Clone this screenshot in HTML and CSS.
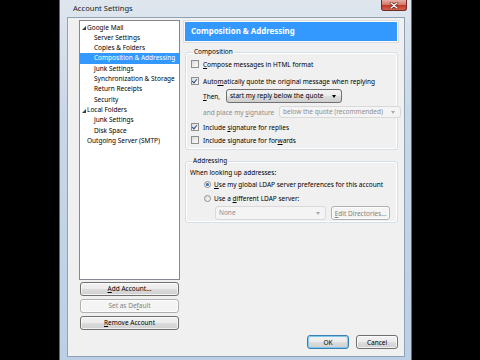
FILE: index.html
```html
<!DOCTYPE html>
<html lang="en">
<head>
  <meta charset="UTF-8">
  <title>Account Settings</title>
  <link rel="stylesheet" href="styles.css">
</head>
<body>
  <div class="window">
    <!-- Title bar -->
    <div class="titlebar">
      <span class="title">Account Settings</span>
      <span class="close-btn">
        <svg width="10" height="7" viewBox="0 0 10 7">
          <path d="M2 1 L8 6 M8 1 L2 6" stroke="#5a1a14" stroke-width="2.6" stroke-linecap="round"/>
          <path d="M2 1 L8 6 M8 1 L2 6" stroke="#fff" stroke-width="1.4" stroke-linecap="round"/>
        </svg>
      </span>
    </div>

    <div class="client">
      <div class="main">
        <!-- Account tree -->
        <div class="left-col">
          <div class="tree">
            <div class="tree-row top"><span class="twisty"></span>Google Mail</div>
            <div class="tree-row child">Server Settings</div>
            <div class="tree-row child">Copies &amp; Folders</div>
            <div class="tree-row child selected">Composition &amp; Addressing</div>
            <div class="tree-row child">Junk Settings</div>
            <div class="tree-row child">Synchronization &amp; Storage</div>
            <div class="tree-row child">Return Receipts</div>
            <div class="tree-row child">Security</div>
            <div class="tree-row top"><span class="twisty"></span>Local Folders</div>
            <div class="tree-row child">Junk Settings</div>
            <div class="tree-row child">Disk Space</div>
            <div class="tree-row top plain">Outgoing Server (SMTP)</div>
          </div>
          <div class="account-buttons">
            <button class="btn"><u>A</u>dd Account...</button>
            <button class="btn" disabled>Set as De<u>f</u>ault</button>
            <button class="btn"><u>R</u>emove Account</button>
          </div>
        </div>

        <!-- Settings pane -->
        <div class="right-col">
          <div class="pane-header">
            <div class="pane-title">Composition &amp; Addressing</div>
          </div>

          <fieldset class="group composition">
            <legend>Composition</legend>
            <div class="row r1">
              <span class="checkbox"></span>
              <span><u>C</u>ompose messages in HTML format</span>
            </div>
            <div class="row r2">
              <span class="checkbox checked"></span>
              <span>Auto<u>m</u>atically quote the original message when replying</span>
            </div>
            <div class="row r3 indent">
              <span class="then-label"><u>T</u>hen,</span>
              <span class="dropdown reply-select">start my reply below the quote<span class="arrow"></span></span>
            </div>
            <div class="row r4 indent">
              <span class="muted sig-label">and place my <u>s</u>ignature</span>
              <span class="dropdown disabled sig-select">below the quote (recommended)<span class="arrow"></span></span>
            </div>
            <div class="row r5">
              <span class="checkbox checked"></span>
              <span>Include <u>s</u>ignature for replies</span>
            </div>
            <div class="row r6">
              <span class="checkbox"></span>
              <span>Include signature for for<u>w</u>ards</span>
            </div>
          </fieldset>

          <fieldset class="group addressing">
            <legend>Addressing</legend>
            <div class="row a1">When looking up addresses:</div>
            <div class="row a2 radio-row">
              <span class="radio selected"></span>
              <span><u>U</u>se my global LDAP server preferences for this account</span>
            </div>
            <div class="row a3 radio-row">
              <span class="radio"></span>
              <span>Use a <u>d</u>ifferent LDAP server:</span>
            </div>
            <div class="row a4">
              <span class="dropdown disabled ldap-select">None<span class="arrow"></span></span>
              <button class="btn dir-btn" disabled><u>E</u>dit Directories...</button>
            </div>
          </fieldset>
        </div>
      </div>

      <div class="footer">
        <button class="btn default">OK</button>
        <button class="btn">Cancel</button>
      </div>
    </div>
  </div>
</body>
</html>
```

FILE: styles.css
```css
body {
  margin: 0;
  height: 360px;
  overflow: hidden;
  background: #000;
  font-family: 'Noto Sans', 'Open Sans', sans-serif;
  font-size: 6.5px;
  color: #000;
}

u {
  text-decoration: underline;
  text-underline-offset: 1px;
}

.window {
  margin-left: 59px;
  width: 351px;
  height: 362px;
  background: linear-gradient(#dfe6ee, #c9d8e8 30%, #bccfe4);
  border-left: 1px solid #5d6b7a;
  border-right: 1px solid #5d6b7a;
  display: flex;
  flex-direction: column;
}

/* Title bar */
.titlebar {
  height: 17px;
  display: flex;
  align-items: flex-start;
}

.title {
  margin: 3px 0 0 13px;
  font-size: 7.6px;
  color: #1b1b1b;
}

.close-btn {
  margin-left: auto;
  margin-right: 4px;
  width: 24px;
  height: 10px;
  border: 1px solid #6e2c26;
  border-top: none;
  border-radius: 0 0 3px 3px;
  background: linear-gradient(#e8b1a6, #d47a6c 45%, #c2382a 55%, #d5624e);
  display: flex;
  align-items: center;
  justify-content: center;
}

.close-btn svg {
  display: block;
}

/* Client area */
.client {
  flex: 1;
  margin: 0 6px 5px 7px;
  background: #f0f0f0;
  border: 1px solid #8ea1b5;
  padding: 2px 5px 0 11px;
  display: flex;
  flex-direction: column;
}

.main {
  display: flex;
  gap: 3px;
  align-items: flex-start;
}

.left-col {
  width: 102px;
  display: flex;
  flex-direction: column;
}

.tree {
  height: 256px;
  background: #fff;
  border: 1px solid #828790;
  padding-top: 1.5px;
}

.tree-row {
  height: 10.33px;
  line-height: 10.33px;
  white-space: nowrap;
  display: flex;
  align-items: center;
}

.tree-row.top {
  padding-left: 2px;
}

.tree-row.plain {
  padding-left: 7px;
}

.tree-row.child {
  padding-left: 14px;
}

.tree-row.selected {
  background: #3399ff;
  color: #fff;
}

.twisty {
  width: 0;
  height: 0;
  border-left: 4px solid transparent;
  border-bottom: 4px solid #3c3c3c;
  margin-right: 1px;
  margin-top: 1px;
}

.account-buttons {
  display: flex;
  flex-direction: column;
  gap: 3px;
  margin-top: 2px;
  padding: 0 1px;
}

/* Buttons */
.btn {
  font-family: inherit;
  font-size: 6.5px;
  color: #000;
  height: 14px;
  padding: 0;
  border: 1px solid #707070;
  border-radius: 3px;
  background: linear-gradient(#f2f2f2, #ebebeb 50%, #dddddd 51%, #cfcfcf);
  box-shadow: inset 0 0 0 1px rgba(255, 255, 255, 0.7);
}

.btn[disabled] {
  color: #838383;
  border-color: #adb2b5;
  background: #f4f4f4;
}

.btn.default {
  border-color: #3c7fb1;
  box-shadow: inset 0 0 0 1px #7fc9f0;
}

/* Right pane */
.right-col {
  width: 216px;
}

.pane-header {
  border: 1px solid #dedede;
  padding: 1px;
  background: #fafafa;
}

.pane-title {
  height: 19px;
  line-height: 19px;
  background: #3399ff;
  color: #fff;
  font-weight: bold;
  font-size: 7.9px;
  padding-left: 6px;
}

.group {
  margin: 4px 1px 0 2px;
  border: 1px solid #d5dfe5;
  border-radius: 3px;
  padding: 0 0 3px 5px;
  box-shadow: inset 0 0 0 1px #fff;
}

.group legend {
  padding: 0 1px;
  margin-left: 2px;
  height: 10px;
  line-height: 10px;
  color: #000;
}

.addressing {
  margin-top: 6px;
  padding-left: 4px;
  padding-bottom: 2px;
}

.row {
  height: 12px;
  display: flex;
  align-items: center;
  white-space: nowrap;
}

.r1 { margin-top: 1px; }
.r2 { margin-top: 5px; }
.r3 { margin-top: 2px; height: 14px; }
.r4 { margin-top: 3px; }
.r5 { margin-top: 3px; }
.r6 { margin-top: 1px; }

.a2 { margin-top: 0; }
.a3 { margin-top: 2px; }
.a4 { margin-top: 2px; height: 14px; padding-left: 25px; }

.indent {
  padding-left: 12px;
}

.radio-row {
  padding-left: 14px;
}

.checkbox {
  width: 6px;
  height: 6px;
  border: 1px solid #8e8f8f;
  background: linear-gradient(135deg, #dcdcdc, #fbfbfb);
  margin-right: 4px;
  flex-shrink: 0;
  position: relative;
}

.checkbox.checked::after {
  content: "";
  position: absolute;
  left: 1px;
  top: 0;
  width: 2px;
  height: 4px;
  border-right: 1.2px solid #2b4a8c;
  border-bottom: 1.2px solid #2b4a8c;
  transform: rotate(40deg);
}

.radio {
  width: 5px;
  height: 5px;
  border: 1px solid #8e8f8f;
  border-radius: 50%;
  background: linear-gradient(135deg, #dcdcdc, #fbfbfb);
  margin-right: 3px;
  flex-shrink: 0;
  position: relative;
}

.radio.selected::after {
  content: "";
  position: absolute;
  left: 1px;
  top: 1px;
  width: 3px;
  height: 3px;
  border-radius: 50%;
  background: #2d6bb5;
}

.then-label {
  width: 23px;
}

.muted {
  color: #8d8d8d;
}

.sig-label {
  width: 76px;
}

.dropdown {
  height: 12px;
  line-height: 12px;
  border: 1px solid #707070;
  border-radius: 3px;
  background: linear-gradient(#f2f2f2, #ebebeb 50%, #dddddd 51%, #cfcfcf);
  padding-left: 3px;
  display: flex;
  align-items: center;
  box-sizing: border-box;
}

.reply-select {
  width: 116px;
  height: 14px;
}

.dropdown .arrow {
  margin-left: auto;
  margin-right: 5px;
  width: 0;
  height: 0;
  border-left: 2.5px solid transparent;
  border-right: 2.5px solid transparent;
  border-top: 3px solid #000;
}

.dropdown.disabled {
  background: #f4f4f4;
  border-color: #d9d9d9;
  color: #8d8d8d;
}

.dropdown.disabled .arrow {
  border-top-color: #a8a8a8;
}

.sig-select {
  width: 122px;
  height: 12px;
  flex-shrink: 0;
  margin-right: -4px;
}

.ldap-select {
  width: 111px;
  height: 14px;
}

.dir-btn {
  width: 59px;
  margin-left: 5px;
}

.footer {
  margin-top: auto;
  display: flex;
  justify-content: flex-end;
  gap: 7px;
  padding: 0 1px 7px 0;
}

.footer .btn {
  width: 42px;
  height: 14px;
}
```
